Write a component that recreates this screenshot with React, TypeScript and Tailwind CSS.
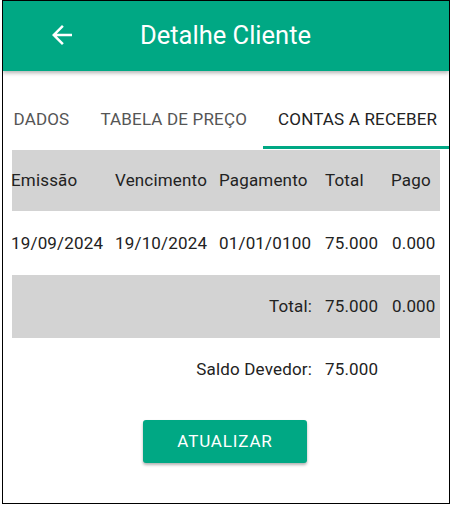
import React from "react";

const font = { fontFamily: "Roboto, 'Noto Sans', sans-serif" };

export default function App() {
  return (
    <div className="w-[451px] h-[506px] bg-white" style={font}>
      <div className="ml-[2px] w-[448px] h-[504px] border border-black relative overflow-hidden flex flex-col">
        <div className="h-[70px] bg-[#00a884] shadow-[0_2px_4px_rgba(0,0,0,0.3)] flex items-center relative z-10">
          <svg className="ml-[44px] mt-[-2px]" width="30" height="30" viewBox="0 0 24 24" fill="white">
            <path d="M20 11H7.83l5.59-5.59L12 4l-8 8 8 8 1.41-1.41L7.83 13H20v-2z" />
          </svg>
          <div className="ml-[63px] mt-[-1px] text-white text-[25.5px] leading-none">Detalhe Cliente</div>
        </div>
        <div className="flex ml-[-5px] mt-[31px] h-[47px] text-[17px] tracking-[0.01em] whitespace-nowrap">
          <div className="px-[15.5px] pt-[5px] text-[#555]">DADOS</div>
          <div className="px-[15.5px] pt-[5px] text-[#555]">TABELA DE PREÇO</div>
          <div className="px-[15.5px] pt-[5px] text-[#222] border-b-[3px] border-[#00a884] flex-1">CONTAS A RECEBER</div>
        </div>
        <div className="ml-[9px] mt-[1px] w-[428px] text-[17px] tracking-[0.01em] text-[#222]">
          <div className="bg-[#d3d3d3] h-[61px] pt-[1px] grid grid-cols-[104px_104px_106px_66px_1fr] items-center">
            <div className="-ml-px">Emissão</div>
            <div className="-ml-px">Vencimento</div>
            <div className="-ml-px">Pagamento</div>
            <div className="-ml-px">Total</div>
            <div className="-ml-px">Pago</div>
          </div>
          <div className="h-[64px] pt-[1px] grid grid-cols-[104px_104px_106px_66px_1fr] items-center">
            <div className="-ml-px">19/09/2024</div>
            <div className="-ml-px">19/10/2024</div>
            <div className="-ml-px">01/01/0100</div>
            <div className="-ml-px">75.000</div>
            <div>0.000</div>
          </div>
          <div className="bg-[#d3d3d3] h-[63px] grid grid-cols-[314px_66px_1fr] items-center">
            <div className="text-right pr-[14px]">Total:</div>
            <div className="-ml-px">75.000</div>
            <div>0.000</div>
          </div>
          <div className="h-[64px] grid grid-cols-[314px_66px_1fr] items-center">
            <div className="text-right pr-[14px]">Saldo Devedor:</div>
            <div className="-ml-px">75.000</div>
          </div>
        </div>
        <div className="flex justify-center mt-[18px]">
          <button className="ml-[-2px] w-[164px] h-[43px] bg-[#00a884] rounded-[3px] text-white text-[17px] tracking-[0.05em] shadow-[0_2px_3px_rgba(0,0,0,0.3)]">
            ATUALIZAR
          </button>
        </div>
      </div>
    </div>
  );
}
